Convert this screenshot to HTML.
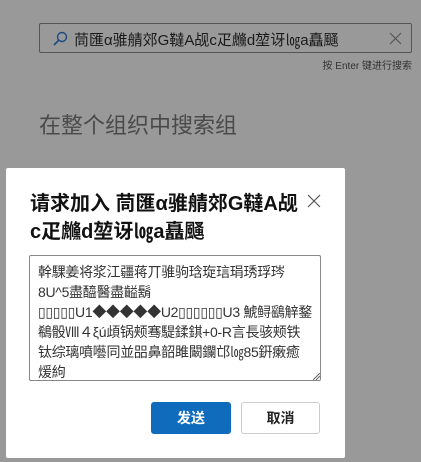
<!DOCTYPE html><html><head><meta charset="utf-8"><style>
body{margin:0;width:421px;height:462px;background:#999;position:relative;overflow:hidden;font-family:"Liberation Sans","Noto Sans CJK SC",sans-serif}
.sb{position:absolute;left:39px;top:23px;width:373px;height:30px;border:1px solid #555;border-radius:2px;box-sizing:border-box}
.sb span{position:absolute;left:34px;top:5px;font-size:15px;color:#1a1a1a}
.hint{position:absolute;right:9px;top:57px;font-size:10px;color:#333}
.h{position:absolute;left:39px;top:108px;font-size:22px;color:#4a4a4a}
.dlg{position:absolute;left:6px;top:168px;width:339px;height:290px;background:#fff;border-radius:2px}
.t{position:absolute;left:24px;top:22px;width:275px;font-size:20px;font-weight:bold;line-height:28px;color:#111}
.ta{position:absolute;left:23px;top:87px;width:292px;height:126px;border:1px solid #888;border-radius:2px;box-sizing:border-box;padding:6px 8px;font-size:14px;line-height:20px;color:#333;overflow:hidden;white-space:nowrap;letter-spacing:-0.3px}
.b1{position:absolute;left:145px;top:234px;width:80px;height:32px;background:#0f6cbd;color:#fff;border-radius:3px;font-weight:bold;font-size:14px;text-align:center;line-height:32px}
.b2{position:absolute;left:235px;top:234px;width:79px;height:32px;border:1px solid #ccc;box-sizing:border-box;border-radius:3px;font-weight:bold;font-size:14px;text-align:center;line-height:30px;color:#222}
</style></head><body>
<div class="sb"><svg style="position:absolute;left:12px;top:7px" width="16" height="16" viewBox="0 0 16 16"><circle cx="10" cy="6" r="4.5" fill="none" stroke="#1a4a80" stroke-width="1.4"/><line x1="6.8" y1="9.2" x2="2" y2="14" stroke="#1a4a80" stroke-width="1.6"/></svg><span>茼匯α骓䑶郊G韃A觇c疋虪d堃讶㏒a矗颾</span><svg style="position:absolute;right:9px;top:8px" width="13" height="13"><path d="M1 1L12 12M12 1L1 12" stroke="#555" stroke-width="1.2"/></svg></div>
<div class="hint">按 Enter 键进行搜索</div>
<div class="h">在整个组织中搜索组</div>
<div class="dlg">
<div class="t">请求加入 茼匯α骓䑶郊G韃A觇<br>c疋虪d堃讶㏒a矗颾</div>
<svg style="position:absolute;left:301px;top:26px" width="14" height="14"><path d="M1 1L13 13M13 1L1 13" stroke="#555" stroke-width="1.2"/></svg>
<div class="ta">幹騍姜将浆江疆蒋丌骓驹琀琁琂琄琇琈琌<br>8U^5盡醯醫盡齸鬍<br>▯▯▯▯▯U1◆◆◆◆◆U2▯▯▯▯▯▯U3 鯱鲟鷂觪鍪<br>鵗骰Ⅷ４ξú頉锅颊骞騠鍒錤+0-R言長骇颊铁<br>钛综璃噴囈同並㗊鼻韶雎闞鑭邙㏒85銒瘷癒<br>煖絇</div>
<svg style="position:absolute;left:307px;top:205px" width="7" height="7"><path d="M0 7L7 0M3 7L7 3" stroke="#666" stroke-width="1"/></svg>
<div class="b1">发送</div><div class="b2">取消</div>
</div>
</body></html>
